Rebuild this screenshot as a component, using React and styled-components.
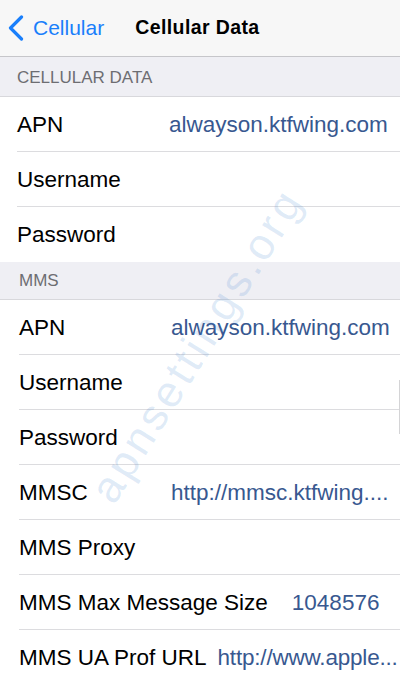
import React from 'react';
import styled, { createGlobalStyle } from 'styled-components';

const GlobalStyle = createGlobalStyle`
	html, body {
		margin: 0;
		padding: 0;
		background: #ffffff;
	}
	body {
		font-family: 'Liberation Sans', Arial, sans-serif;
		-webkit-font-smoothing: antialiased;
	}
`;

const Screen = styled.div`
	position: relative;
	width: 400px;
	height: 688px;
	overflow: hidden;
	background: #ffffff;
`;

const NavBar = styled.div`
	display: flex;
	align-items: center;
	height: 56px;
	background: #f7f7f7;
	border-bottom: 1px solid #c6c6ca;
	padding-left: 8px;
`;

const BackButton = styled.div`
	display: flex;
	align-items: center;
	gap: 9px;
	color: #1a7ffb;
	font-size: 21px;
	padding-bottom: 1px;
`;

const Title = styled.div`
	margin-left: 31px;
	font-size: 19.5px;
	font-weight: bold;
	color: #000;
	letter-spacing: 0.4px;
	padding-bottom: 1px;
`;

const SectionHeader = styled.div`
	display: flex;
	align-items: center;
	height: ${({ $height }) => $height}px;
	box-sizing: border-box;
	padding-left: ${({ $inset }) => $inset}px;
	padding-top: ${({ $top }) => $top || 0}px;
	background: #efeff4;
	border-bottom: 1px solid #d8d8dc;
	color: #6d6d72;
	font-size: 17px;
`;

const Row = styled.div`
	display: flex;
	align-items: center;
	height: 55px;
	box-sizing: border-box;
	margin-left: ${({ $inset }) => $inset}px;
	border-bottom: ${({ $last }) => ($last ? 'none' : '1px solid #dcdcdf')};
	white-space: nowrap;
	font-size: 22.5px;
	padding-top: 1px;
`;

const Label = styled.span`
	flex-shrink: 0;
	min-width: ${({ $min }) => $min}px;
	color: #000;
`;

const Value = styled.span`
	margin-left: ${({ $gap }) => $gap || 0}px;
	color: #385890;
	white-space: nowrap;
	letter-spacing: ${({ $tight }) => ($tight ? '-0.2px' : 'normal')};
`;

const Watermark = styled.div`
	position: absolute;
	left: 197px;
	top: 345px;
	transform: translate(-50%, -50%) rotate(-58deg);
	font-size: 44px;
	letter-spacing: 4px;
	color: rgba(60, 130, 210, 0.17);
	white-space: nowrap;
	pointer-events: none;
`;

const ScrollMark = styled.div`
	position: absolute;
	right: 0;
	top: 380px;
	width: 1px;
	height: 54px;
	background: #d4d4d6;
`;

const Chevron = () => (
	<svg width="16" height="26" viewBox="0 0 16 26">
		<polyline
			points="13.5,2 2.5,13 13.5,24"
			fill="none"
			stroke="#1a7ffb"
			strokeWidth="3.2"
			strokeLinecap="round"
			strokeLinejoin="round"
		/>
	</svg>
);

const cellular = [
	{ label: 'APN', value: 'alwayson.ktfwing.com' },
	{ label: 'Username' },
	{ label: 'Password' }
];

const mms = [
	{ label: 'APN', value: 'alwayson.ktfwing.com' },
	{ label: 'Username' },
	{ label: 'Password' },
	{ label: 'MMSC', value: 'http://mmsc.ktfwing....' },
	{ label: 'MMS Proxy' },
	{ label: 'MMS Max Message Size', value: '1048576', gap: 24 },
	{ label: 'MMS UA Prof URL', value: 'http://www.apple...', gap: 11, tight: true }
];

export default function App() {
	return (
		<Screen>
			<GlobalStyle />
			<NavBar>
				<BackButton>
					<Chevron />
					Cellular
				</BackButton>
				<Title>Cellular Data</Title>
			</NavBar>

			<SectionHeader $height={40} $inset={17} $top={3}>
				CELLULAR DATA
			</SectionHeader>
			{cellular.map((row, i) => (
				<Row key={row.label} $inset={17} $last={i === cellular.length - 1}>
					<Label $min={152}>{row.label}</Label>
					{row.value && <Value>{row.value}</Value>}
				</Row>
			))}

			<SectionHeader $height={38} $inset={19}>MMS</SectionHeader>
			{mms.map((row, i) => (
				<Row key={row.label + i} $inset={19} $last={i === mms.length - 1}>
					<Label $min={152}>{row.label}</Label>
					{row.value && (
						<Value $gap={row.gap} $tight={row.tight}>
							{row.value}
						</Value>
					)}
				</Row>
			))}

			<Watermark>apnsettings.org</Watermark>
			<ScrollMark />
		</Screen>
	);
}
